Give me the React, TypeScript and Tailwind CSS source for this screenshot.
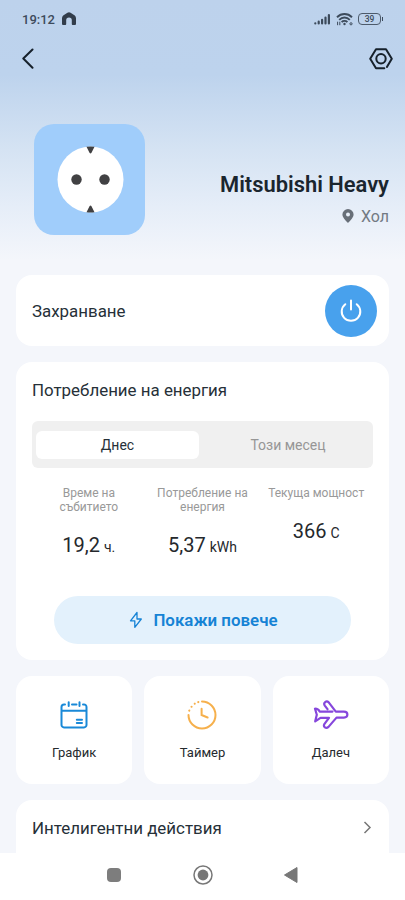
import { useState } from "react";

const TABS = ["Днес", "Този месец"];

const METRICS = [
  { label: "Време на събитието", value: "19,2", unit: "ч.", width: "w-[68px]" },
  { label: "Потребление на енергия", value: "5,37", unit: "kWh", width: "w-[100px]" },
  { label: "Текуща мощност", value: "366", unit: "C", width: "w-[110px]" }
];

const ACTIONS = [
  { label: "График", icon: <CalendarIcon /> },
  { label: "Таймер", icon: <TimerIcon /> },
  { label: "Далеч", icon: <PlaneIcon /> }
];

function CalendarIcon() {
  return (
    <svg width="28" height="28" viewBox="0 0 28 28" fill="none" stroke="#1989d8" strokeWidth="2" strokeLinecap="round">
      <path d="M5 3.4H4a2.5 2.5 0 0 0-2.5 2.5v18a2.5 2.5 0 0 0 2.5 2.5h20a2.5 2.5 0 0 0 2.5-2.5v-18A2.5 2.5 0 0 0 24 3.4h-1M12 3.4h4.5M1.5 9.7h25M8.7 1.2v3.7M19.5 1.2v3.7M16.8 18.8h5.2M16.8 22h5.2" />
    </svg>
  );
}

function TimerIcon() {
  return (
    <svg width="30" height="30" viewBox="0 0 30 30" fill="none" stroke="#f6b04c" strokeWidth="2" strokeLinecap="round">
      <path d="M15 1.5A13.500 13.500 0 1 1 1.5 15M14.6 8.800v6.200l6 2.500" />
      <path d="M2.200 10.700l.1-.2M4.500 6.800l.1-.1M7.700 3.700l.1-.1M11.200 2.100l.2-.1" />
    </svg>
  );
}

function PlaneIcon() {
  return (
    <svg width="36" height="30" viewBox="0 0 36 30" fill="none" stroke="#8647dc" strokeWidth="2.2" strokeLinecap="round" strokeLinejoin="round">
      <path d="M14.5 9.2L11.8 5.600C9.900 2.700 13.400.2 15.700 2.400L22.800 11.600H31c4.500 0 4.500 6 0 6h-7.500l-8 9.300c-2.500 2.300-5.800-.1-4-3L16 17.800H7.500L2.200 21.300l1.600-6.600-1.800-6q3.400 0 4.700 2.900H19.500" />
    </svg>
  );
}

function StatusBar() {
  return (
    <div className="flex h-[38px] items-center justify-between px-[22px] text-[#3d4b5c]">
      <div className="flex items-center gap-[7px]">
        <span className="pt-px text-[13px] font-medium leading-4">19:12</span>
        <svg className="-mt-px" width="14" height="13" viewBox="0 0 14 13">
          <path d="M0 12V6.2Q0 4.600 1.200 3.600L5.400.7q1.600-1 3.200 0l4.200 2.900Q14 4.600 14 6.200V12q0 1-1 1h-2.400q-.8 0-.8-1V8.300a2.800 2.800 0 0 0-5.600 0V12q0 1-.8 1H1q-1 0-1-1z" fill="#323d4b" />
        </svg>
      </div>
      <div className="flex items-center gap-[5px]">
        <svg width="17" height="12" viewBox="0 0 17 12" stroke="currentColor" strokeWidth="2.200" strokeLinecap="round">
          <path d="M1.300 10.300v.2M4.700 8.700v1.800M8.100 6.800v3.700M11.500 4.500v6M14.900 2v8.500" />
        </svg>
        <svg width="17" height="14" viewBox="0 0 17 14" fill="none" stroke="currentColor" strokeWidth="1.900">
          <path d="M1 5.200c4.300-4.200 10.700-4.200 15 0M3.200 7.800c3-3 7.600-3 10.600 0M5.600 10.200c1.600-1.600 4.200-1.600 5.800 0" />
          <circle cx="8.500" cy="12" r="1.200" fill="currentColor" stroke="none" />
          <path d="M1.600 9.700v3.500M3.800 9.700v3.500" strokeWidth="1" />
          <circle cx="15" cy="11.800" r="1.100" strokeWidth="1" />
        </svg>
        <div className="flex items-center gap-px">
          <span className="flex h-3 w-[23px] items-center justify-center rounded-[4px] border border-[#4c5a6b] text-[8.500px] font-medium leading-none">
            39
          </span>
          <span className="h-1 w-px bg-[#3d4b5c]" />
        </div>
      </div>
    </div>
  );
}

function SocketTile() {
  return (
    <div className="flex size-[111px] items-center justify-center rounded-[20px] bg-[#a0cdfb] pl-px">
      <svg width="67" height="67" viewBox="0 0 67 67">
        <circle cx="33.500" cy="33.500" r="33" fill="#fff" />
        <g fill="#414143">
          <circle cx="19.500" cy="33.500" r="5.200" />
          <circle cx="47.500" cy="33.500" r="5.200" />
          <path d="M29.500.8q4-.7 8 0L34.500 6.800q-1 1.200-2 0zM29.500 66.200q4 .7 8 0L34.500 60.200q-1-1.200-2 0z" />
        </g>
      </svg>
    </div>
  );
}

function Header() {
  return (
    <>
      <div className="flex h-[42px] items-center justify-between pl-[22px] pr-3 text-[#16212b]">
        <button type="button" aria-label="Назад">
          <svg width="13" height="22" viewBox="0 0 13 22" fill="none" stroke="currentColor" strokeWidth="2" strokeLinecap="round" strokeLinejoin="round">
            <path d="M10.500 1.500L1.300 10.500l9.200 9.300" />
          </svg>
        </button>
        <button type="button" aria-label="Настройки">
          <svg width="24" height="22" viewBox="0 0 24 22" fill="none" stroke="currentColor" strokeWidth="2" strokeLinecap="round" strokeLinejoin="round">
            <path d="M15.300 20.300H7L1.200 10.800 7 1.300h10l5.800 9.500-4.900 8.200" />
            <circle cx="12" cy="10.800" r="4.700" />
          </svg>
        </button>
      </div>
      <div className="mt-[44px] flex items-center justify-between pl-[34px] pr-4">
        <SocketTile />
        <div className="flex flex-col items-end pt-[41px]">
          <h1 className="text-[21.900px] font-semibold leading-7 text-[#1a252e]">Mitsubishi Heavy</h1>
          <div className="mt-[6px] flex items-center gap-[7px] text-base leading-6 text-[#737a83]">
            <svg className="-mt-0.5" width="12" height="14" viewBox="0 0 12 14">
              <path fillRule="evenodd" fill="#686f78" d="M6 0a5.600 5.600 0 0 0-5.600 5.600C.4 9.200 6 14 6 14s5.600-4.800 5.600-8.400A5.600 5.600 0 0 0 6 0zm0 3.600a2 2 0 1 1 0 4 2 2 0 0 1 0-4z" />
            </svg>
            Хол
          </div>
        </div>
      </div>
    </>
  );
}

function EnergyCard() {
  const [tab, setTab] = useState(0);

  return (
    <section className="flex h-[298px] shrink-0 flex-col rounded-2xl bg-white px-4 pt-4">
      <h2 className="text-[16.900px] leading-6 text-[#263038]">Потребление на енергия</h2>
      <div className="mt-[19px] flex h-[47px] shrink-0 items-center rounded-md bg-[#f0f0f0] px-1">
        {TABS.map((label, index) => (
          <button
            key={label}
            type="button"
            onClick={() => setTab(index)}
            className={
              index === tab
                ? "h-7 w-[163px] rounded-md bg-white text-sm text-[#263038]"
                : "h-7 flex-1 pl-2 text-sm text-[#969696]"
            }
          >
            {label}
          </button>
        ))}
      </div>
      <div className="mt-[18px] grid grid-cols-3">
        {METRICS.map(({ label, value, unit, width }) => (
          <div key={label} className="flex flex-col items-center text-center">
            <p className={`text-xs leading-[14px] text-[#999] ${width}`}>{label}</p>
            <p className="mt-[17px] leading-7 text-[#25282c]">
              <span className="text-xl">{value}</span> <span className="text-sm">{unit}</span>
            </p>
          </div>
        ))}
      </div>
      <button
        type="button"
        className="mx-[22px] mt-auto mb-4 flex h-12 shrink-0 items-center justify-center gap-2.5 rounded-full bg-[#e3f1fc] pl-0.5 pt-px text-[16.900px] font-semibold text-[#1683d5]"
      >
        <svg className="-mt-0.5" width="14" height="18" viewBox="0 0 14 18" fill="none" stroke="currentColor" strokeWidth="1.300" strokeLinejoin="round">
          <path d="M8 1.500L1.500 9.800h4.300v6.500l6.500-8.300H8z" />
        </svg>
        Покажи повече
      </button>
    </section>
  );
}

function NavBar() {
  return (
    <nav className="flex h-[47px] shrink-0 items-center justify-between bg-white px-[107px] pb-[3px]">
      <span className="size-[14px] rounded-sm bg-[#7d7d7d]" />
      <svg width="20" height="20" viewBox="0 0 20 20" fill="none" stroke="#777">
        <circle cx="10" cy="10" r="9" strokeWidth="1.500" />
        <circle cx="10" cy="10" r="5.400" fill="#777" stroke="none" />
      </svg>
      <svg width="14" height="16" viewBox="0 0 14 16">
        <path d="M13 .5v15L.5 8z" fill="#777" stroke="#777" strokeLinejoin="round" />
      </svg>
    </nav>
  );
}

export default function App() {
  return (
    <div className="flex h-[900px] w-[405px] flex-col overflow-hidden bg-[#f4f6fb] font-['Roboto','Noto_Sans',sans-serif]">
      <header className="h-[275px] shrink-0 bg-[linear-gradient(#bdd2ec_0,#bdd3ed_75px,#d5e3f3_150px,#e5edf8_205px,#f4f6fb_260px)]">
        <StatusBar />
        <Header />
      </header>
      <main className="flex min-h-0 flex-1 flex-col gap-4 overflow-hidden px-4">
        <section className="flex h-[71px] shrink-0 items-center justify-between rounded-2xl bg-white pl-4 pr-3">
          <span className="pt-[3px] text-[16.900px] text-[#263038]">Захранване</span>
          <button type="button" aria-label="Захранване" className="flex size-[52px] items-center justify-center rounded-full bg-[#48a1ed]">
            <svg width="22" height="24" viewBox="0 0 22 24" fill="none" stroke="#fff" strokeWidth="2" strokeLinecap="round">
              <path d="M11 1.500v9M5.300 5.200a9.300 9.300 0 1 0 11.400 0" />
            </svg>
          </button>
        </section>
        <EnergyCard />
        <div className="grid h-[108px] shrink-0 grid-cols-3 gap-3">
          {ACTIONS.map(({ label, icon }) => (
            <button key={label} type="button" className="flex flex-col items-center rounded-2xl bg-white pt-6">
              <span className="flex h-[30px] items-center">{icon}</span>
              <span className="mt-[13px] text-[13px] leading-5 text-[#252a2e]">{label}</span>
            </button>
          ))}
        </div>
        <section className="flex h-[72px] shrink-0 items-start justify-between rounded-t-2xl bg-white px-4 pt-4">
          <span className="text-[16.900px] leading-6 text-[#263038]">Интелигентни действия</span>
          <svg className="mt-[5px] mr-px" width="9" height="13" viewBox="0 0 9 13" fill="none" stroke="#777" strokeWidth="1.500">
            <path d="M1.500 1l5.500 5.500L1.500 12" />
          </svg>
        </section>
      </main>
      <NavBar />
    </div>
  );
}
